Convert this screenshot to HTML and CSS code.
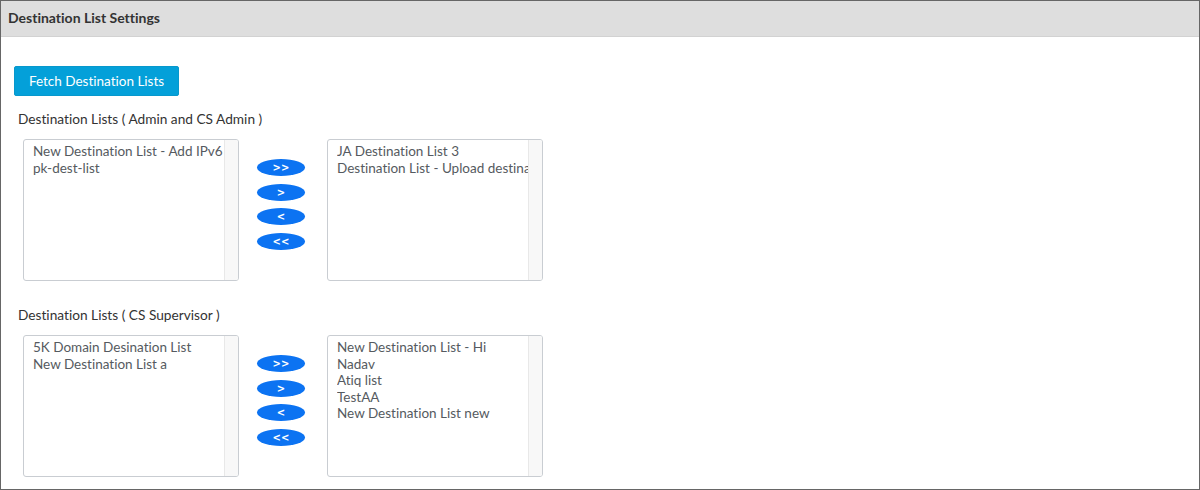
FILE: index.html
```html
<!DOCTYPE html>
<html>
<head>
<meta charset="utf-8">
<link rel="stylesheet" href="styles.css">
</head>
<body>
<div class="panel">
  <div class="header">Destination List Settings</div>
  <div class="content">
    <button class="fetch">Fetch Destination Lists</button>
    <div class="label">Destination Lists ( Admin and CS Admin )</div>
    <div class="transfer">
      <div class="listbox">
        <div class="items">
          <div class="item">New Destination List - Add IPv6</div>
          <div class="item">pk-dest-list</div>
        </div>
        <div class="track"></div>
      </div>
      <div class="arrows">
        <button class="arrow">&gt;&gt;</button>
        <button class="arrow">&gt;</button>
        <button class="arrow">&lt;</button>
        <button class="arrow">&lt;&lt;</button>
      </div>
      <div class="listbox">
        <div class="items">
          <div class="item">JA Destination List 3</div>
          <div class="item">Destination List - Upload destination</div>
        </div>
        <div class="track"></div>
      </div>
    </div>
    <div class="label second">Destination Lists ( CS Supervisor )</div>
    <div class="transfer">
      <div class="listbox">
        <div class="items">
          <div class="item">5K Domain Desination List</div>
          <div class="item">New Destination List a</div>
        </div>
        <div class="track"></div>
      </div>
      <div class="arrows">
        <button class="arrow">&gt;&gt;</button>
        <button class="arrow">&gt;</button>
        <button class="arrow">&lt;</button>
        <button class="arrow">&lt;&lt;</button>
      </div>
      <div class="listbox">
        <div class="items">
          <div class="item">New Destination List - Hi</div>
          <div class="item">Nadav</div>
          <div class="item">Atiq list</div>
          <div class="item">TestAA</div>
          <div class="item">New Destination List new</div>
        </div>
        <div class="track"></div>
      </div>
    </div>
  </div>
</div>
</body>
</html>
```
FILE: styles.css
```css
html, body {
  margin: 0;
  padding: 0;
  background: #ffffff;
}
body {
  font-family: Lato, "Liberation Sans", sans-serif;
  font-variant-ligatures: none;
  color: #333333;
}
.panel {
  width: 1200px;
  height: 490px;
  box-sizing: border-box;
  border: 1px solid #666666;
  overflow: hidden;
}
.header {
  height: 35px;
  line-height: 33px;
  background: #dedede;
  border-bottom: 1px solid #d2d2d2;
  padding-left: 7px;
  font-size: 14px;
  font-weight: 700;
  color: #333333;
}
.content {
  padding: 29px 0 0 13px;
}
.fetch {
  display: block;
  width: 165px;
  height: 30px;
  margin: 0;
  padding: 0;
  border: 1px solid #0898cc;
  border-radius: 2px;
  background: #04a0d9;
  color: #ffffff;
  font-family: Lato, "Liberation Sans", sans-serif;
  font-variant-ligatures: none;
  font-size: 13.5px;
}
.label {
  margin: 13px 0 10px 4px;
  height: 20px;
  line-height: 20px;
  font-size: 13.7px;
  color: #333333;
}
.label.second {
  margin-top: 24px;
}
.transfer {
  display: flex;
  align-items: flex-start;
  margin-left: 9px;
}
.listbox {
  display: flex;
  width: 216px;
  height: 142px;
  box-sizing: border-box;
  border: 1px solid #c9cdd2;
  border-radius: 3px;
  overflow: hidden;
}
.items {
  flex: 1;
  min-width: 0;
  padding: 3px 0 0 9px;
  overflow: hidden;
}
.item {
  height: 16.5px;
  line-height: 16.5px;
  font-size: 13.5px;
  color: #555a60;
  white-space: nowrap;
  overflow: hidden;
}
.track {
  width: 13px;
  background: #f8f8f8;
  border-left: 1px solid #e8e8e8;
}
.arrows {
  display: flex;
  flex-direction: column;
  gap: 7.5px;
  margin: 20px 22px 0 18px;
}
.arrow {
  width: 48px;
  height: 17px;
  margin: 0;
  padding: 0;
  border: none;
  border-radius: 50%;
  background: #0c73f2;
  color: #ffffff;
  font-family: "DejaVu Sans", sans-serif;
  font-size: 10px;
  font-weight: 700;
  line-height: 17px;
}
```
